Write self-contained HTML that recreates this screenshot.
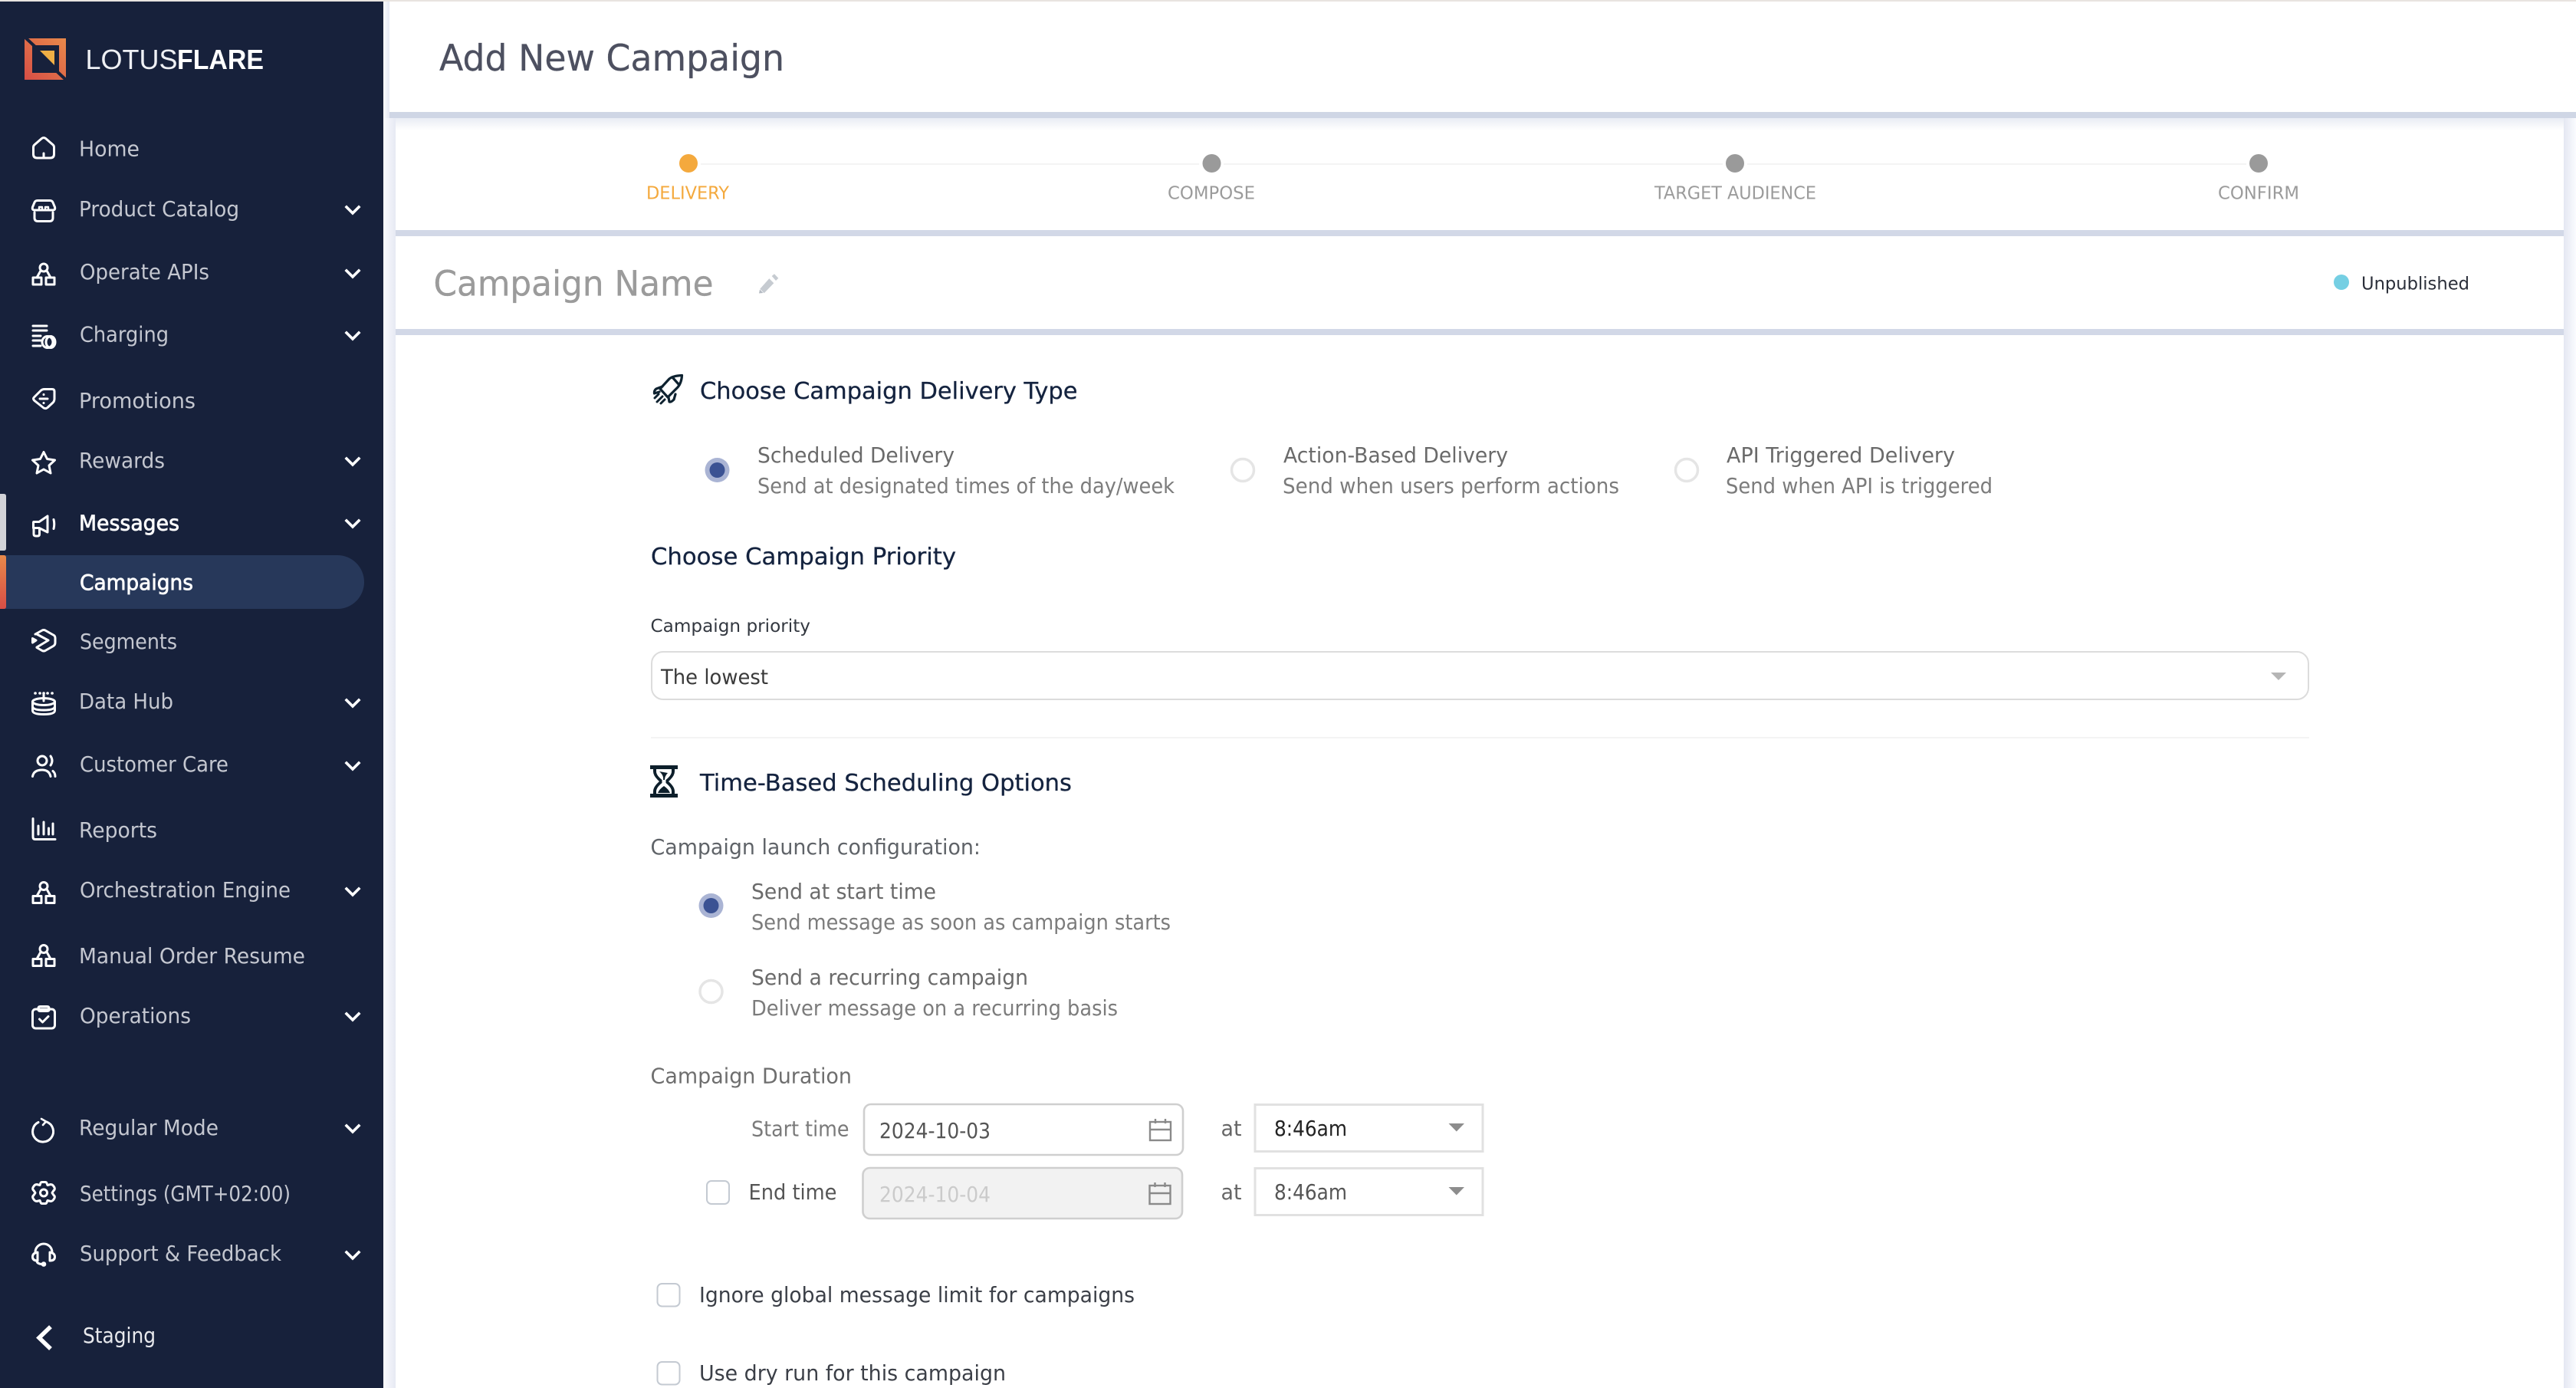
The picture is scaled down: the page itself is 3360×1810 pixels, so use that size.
<!DOCTYPE html>
<html lang="en">
<head>
<meta charset="utf-8">
<title>Add New Campaign</title>
<style>
html,body{margin:0;padding:0;width:3360px;height:1810px;overflow:hidden;background:#fff}
svg{display:block}
text{font-family:"DejaVu Sans","Liberation Sans",sans-serif;white-space:pre}
.lg{font-family:"Liberation Sans",Arial,sans-serif}
.n{font-size:27.4px;fill:#c4c7d0}
.na{font-size:27.4px;fill:#fff;stroke:#fff;stroke-width:.7px}
.ic{fill:none;stroke:#fff;stroke-width:3;stroke-linecap:round;stroke-linejoin:round}
.ch{fill:none;stroke:#fff;stroke-width:3.6;stroke-linecap:square;stroke-linejoin:miter}
.st{font-size:23.5px;fill:#9b9b9b}
.h{font-size:30.4px;fill:#14233f;stroke:#14233f;stroke-width:.3px}
.t{font-size:27.4px;fill:#6a6a6a}
.s{font-size:27.4px;fill:#7c7c7c}
.b{fill:none;stroke:#c4cad2;stroke-width:2}
</style>
</head>
<body>
<svg xmlns="http://www.w3.org/2000/svg" width="3360" height="1810" viewBox="0 0 3360 1810">
<defs>
<linearGradient id="lg" x1="1" y1="0" x2="0" y2="1"><stop offset="0" stop-color="#e8894a"/><stop offset="1" stop-color="#d74e46"/></linearGradient>
<linearGradient id="bar" x1="0" y1="0" x2="0" y2="1"><stop offset="0" stop-color="#e8894a"/><stop offset="1" stop-color="#d74e46"/></linearGradient>
<linearGradient id="sl" x1="0" y1="0" x2="1" y2="0"><stop offset="0" stop-color="#fbfbfe"/><stop offset="1" stop-color="#e6e9f3"/></linearGradient>
<linearGradient id="sr" x1="0" y1="0" x2="1" y2="0"><stop offset="0" stop-color="#e4e7f2"/><stop offset="1" stop-color="#fafbfe"/></linearGradient>
<linearGradient id="st" x1="0" y1="0" x2="0" y2="1"><stop offset="0" stop-color="#e9ecf4"/><stop offset="1" stop-color="#ffffff"/></linearGradient>
<g id="org" class="ic"><circle cx="16" cy="7" r="5"/><rect x="2" y="20" width="11" height="9"/><rect x="19" y="20" width="11" height="9"/><path d="M12 11 L7 20 M20 11 L25 20"/></g>
</defs>

<!-- page -->
<rect width="3360" height="1810" fill="#fff"/>
<rect x="0" y="0" width="3360" height="2" fill="#e8e4e0"/>

<!-- shadows + cards -->
<rect x="500" y="2" width="8" height="152" fill="url(#sl)"/>
<rect x="500" y="154" width="16" height="1656" fill="url(#sl)"/>
<rect x="3344" y="154" width="16" height="1656" fill="url(#sr)"/>
<rect x="508" y="146" width="2852" height="8" fill="#cfd6e5"/>
<rect x="516" y="154" width="2828" height="16" fill="url(#st)"/>
<rect x="516" y="300" width="2828" height="8" fill="#d2d8e7"/>
<rect x="516" y="429" width="2828" height="8" fill="#d2d8e7"/>

<!-- sidebar -->
<rect x="0" y="2" width="500" height="1808" fill="#17213b"/>
<path d="M32 50 H86 V104 H32 Z M42 59 V95 H77 V59 Z" fill="url(#lg)" fill-rule="evenodd"/>
<path d="M33 49 L47 62 M72 91 L87 105" stroke="#17213b" stroke-width="4" fill="none"/>
<path d="M52 66 H71 V85 Z" fill="#efaf45"/>
<text class="lg" x="111.5" y="90" font-size="36" fill="#eef0f4" textLength="120" lengthAdjust="spacingAndGlyphs">LOTUS</text>
<text class="lg" x="231" y="90" font-size="36" fill="#fff" style="font-weight:700" textLength="113" lengthAdjust="spacingAndGlyphs">FLARE</text>

<!-- active marks -->
<path d="M0 644 H5 Q8 644 8 647 V715 Q8 718 5 718 H0 Z" fill="#d2d3d8"/>
<path d="M0 724 H440 A35 35 0 0 1 440 794 H0 Z" fill="#27385a"/>
<path d="M0 724 H5 Q8 724 8 727 V791 Q8 794 5 794 H0 Z" fill="url(#bar)"/>

<!-- nav labels -->
<text class="n" x="103" y="203.5" textLength="79" lengthAdjust="spacingAndGlyphs">Home</text>
<text class="n" x="103" y="282" textLength="209" lengthAdjust="spacingAndGlyphs">Product Catalog</text>
<text class="n" x="104" y="364" textLength="169" lengthAdjust="spacingAndGlyphs">Operate APIs</text>
<text class="n" x="104" y="445.5" textLength="116" lengthAdjust="spacingAndGlyphs">Charging</text>
<text class="n" x="103" y="532" textLength="152" lengthAdjust="spacingAndGlyphs">Promotions</text>
<text class="n" x="103" y="610" textLength="112" lengthAdjust="spacingAndGlyphs">Rewards</text>
<text class="na" x="103" y="691.5" textLength="131" lengthAdjust="spacingAndGlyphs">Messages</text>
<text class="na" x="104" y="769" textLength="148" lengthAdjust="spacingAndGlyphs">Campaigns</text>
<text class="n" x="104" y="846" textLength="127" lengthAdjust="spacingAndGlyphs">Segments</text>
<text class="n" x="103" y="924" textLength="123" lengthAdjust="spacingAndGlyphs">Data Hub</text>
<text class="n" x="104" y="1006" textLength="194" lengthAdjust="spacingAndGlyphs">Customer Care</text>
<text class="n" x="103" y="1092" textLength="102" lengthAdjust="spacingAndGlyphs">Reports</text>
<text class="n" x="104" y="1170" textLength="275" lengthAdjust="spacingAndGlyphs">Orchestration Engine</text>
<text class="n" x="103" y="1256" textLength="295" lengthAdjust="spacingAndGlyphs">Manual Order Resume</text>
<text class="n" x="104" y="1334" textLength="145" lengthAdjust="spacingAndGlyphs">Operations</text>
<text class="n" x="103" y="1480" textLength="182" lengthAdjust="spacingAndGlyphs">Regular Mode</text>
<text class="n" x="104" y="1566" textLength="275" lengthAdjust="spacingAndGlyphs">Settings (GMT+02:00)</text>
<text class="n" x="104" y="1644" textLength="263" lengthAdjust="spacingAndGlyphs">Support &amp; Feedback</text>
<text x="108" y="1751" font-size="27.4" fill="#e8e9ed" textLength="95" lengthAdjust="spacingAndGlyphs">Staging</text>

<!-- chevrons -->
<g class="ch">
<path d="M452 270 L460 278 L468 270"/>
<path d="M452 353 L460 361 L468 353"/>
<path d="M452 434 L460 442 L468 434"/>
<path d="M452 598 L460 606 L468 598"/>
<path d="M452 679 L460 687 L468 679"/>
<path d="M452 913 L460 921 L468 913"/>
<path d="M452 995 L460 1003 L468 995"/>
<path d="M452 1159 L460 1167 L468 1159"/>
<path d="M452 1322 L460 1330 L468 1322"/>
<path d="M452 1468 L460 1476 L468 1468"/>
<path d="M452 1633 L460 1641 L468 1633"/>
</g>

<!-- nav icons -->
<g class="ic" transform="translate(41,178)"><path d="M2.5 14 Q2.5 12 4 10.8 L13.5 2.5 Q16 .8 18.5 2.5 L28 10.8 Q29.5 12 29.5 14 V23 Q29.5 28 24.5 28 H7.5 Q2.5 28 2.5 23 Z M16 22 V28"/></g>
<g class="ic" transform="translate(41,260)"><path d="M8 1.5 H24 Q27 1.5 28 4 L30.5 10 Q31.5 14 28 14 H4 Q.5 14 1.5 10 L4 4 Q5 1.5 8 1.5Z"/><path d="M10 14 V10 H14 V14 M18 14 V10 H22 V14" stroke-width="2.4"/><path d="M4 17 V24 Q4 28.5 8.5 28.5 H23.5 Q28 28.5 28 24 V17"/></g>
<use href="#org" transform="translate(41,342)"/>
<g class="ic" transform="translate(41,423)"><path d="M2 2 H20 M2 8 H20 M2 15 H12 M2 21 H12 M2 28 H12"/><ellipse cx="21" cy="23" rx="7" ry="7.5"/><ellipse cx="25" cy="23" rx="6" ry="7.5"/></g>
<g class="ic" transform="translate(41,505)"><path d="M3.5 13 L12 4.5 Q14 2.5 17 2.5 H27 Q30 2.5 30 5.5 V15 Q30 18 28 20 L21 26.5 Q18.5 28.5 16 27 L4 17.5 Q1.5 15 3.5 13Z"/><path d="M11 15 H21 M16 9.5 V9.6 M16 20.5 V20.6"/></g>
<g class="ic" transform="translate(41,588)"><path d="M16 1.5 L20.5 10.5 L30.5 12 L23 19 L25 29 L16 24 L7 29 L9 19 L1.5 12 L11.5 10.5 Z"/></g>
<g class="ic" transform="translate(41,670.5)"><path d="M3 10 H10 L21 2.5 V23.5 L10 18 H2.5 V11 Q2.5 10 3 10Z"/><path d="M3 18 V26 Q3 28.5 6 28.5 H8 Q10.5 28.5 10.5 26 V19"/><path d="M29 7 Q30.5 13 29 19" stroke-width="3"/></g>
<g class="ic" transform="translate(41,820)"><path d="M5 7 L14 2 Q16 1 18 2 L28.5 8 Q31 9 31 12 V18 Q31 21 28.5 22.5 L18 28.5 Q16 29.5 14 28.5 L7 24.5"/><path d="M7 7 L22 15 L7 24"/><path d="M1.5 12.5 L6 15 L1.5 18 Z"/></g>
<g class="ic" transform="translate(41,901)"><path d="M5 3 H5.1 M11 3 H11.1 M16 3 H16.1 M21 3 H21.1 M27 3 H27.1" stroke-width="3.6"/><path d="M16 3 V13" /><ellipse cx="16" cy="14" rx="14.5" ry="4.5"/><path d="M1.5 14 V25.5 Q1.5 30.5 16 30.5 Q30.5 30.5 30.5 25.5 V14 M1.5 20 Q1.5 25 16 25 Q30.5 25 30.5 20"/></g>
<g class="ic" transform="translate(41,984)"><circle cx="14" cy="8" r="6"/><path d="M25 2 Q29 8 25 14"/><path d="M1.5 28.5 Q3 20 14 20 Q23 20 25 28.5"/><path d="M28 21.5 Q31 24 31 28.5"/></g>
<g class="ic" transform="translate(41,1066)"><path d="M2 1.5 V25.5 Q2 28.5 5 28.5 H31"/><path d="M9 11 V22 M16 6 V22 M22.5 14 V22 M28 8 V22"/></g>
<use href="#org" transform="translate(41,1148.5)"/>
<use href="#org" transform="translate(41,1230.5)"/>
<g class="ic" transform="translate(41,1311)"><rect x="1.5" y="5" width="29" height="25" rx="4"/><path d="M9 5.5 V4 Q9 1.5 11.5 1.5 H20.5 Q23 1.5 23 4 V5.5 Q23 7.5 20.5 7.5 H11.5 Q9 7.5 9 5.5Z"/><path d="M10.5 18 L14.5 22 L22 14.5"/></g>
<g class="ic" transform="translate(41,1458)"><path d="M20 5 A13.5 13.5 0 1 1 9 5.5"/><path d="M13 1 L19 4.5 L15 9" stroke-width="2.6"/></g>
<g class="ic" transform="translate(41,1540)"><path d="M12 2.5 Q12.5 1.5 14 1.5 H18 Q19.5 1.5 20 3 L21 5.5 L25 4.5 Q27.5 4.5 29 7 L30 8.5 Q31 11 29 12.5 L27 15.5 L29 18.5 Q31 20 30 22.5 L29 24 Q27.5 26.5 25 26.5 L21 25.5 L20 28 Q19.5 29.5 18 29.5 H14 Q12.5 29.5 12 28 L11 25.5 L7 26.5 Q4.5 26.5 3 24 L2 22.5 Q1 20 3 18.5 L5 15.5 L3 12.5 Q1 11 2 8.5 L3 7 Q4.5 4.5 7 4.5 L11 5.5 Z"/><circle cx="16" cy="15.5" r="4.5"/></g>
<g class="ic" transform="translate(41,1621)"><path d="M5 12 A11 11 0 0 1 27 12"/><path d="M8 12 Q1.5 13 1.5 18 Q1.5 23 8 23 Z M24 12 Q30.5 13 30.5 18 Q30.5 23 24 23 Z"/><path d="M7 24 Q8 27 13 27.5"/><circle cx="16" cy="27.5" r="1.8" fill="#fff"/></g>
<path d="M64 1732 L51 1744.5 L64 1757" fill="none" stroke="#fff" stroke-width="5.5" stroke-linecap="square"/>

<!-- header -->
<text x="573" y="92" font-size="47" fill="#4d5060" stroke="#4d5060" stroke-width=".3" textLength="450" lengthAdjust="spacingAndGlyphs">Add New Campaign</text>

<!-- stepper -->
<path d="M914 214 H1564 M1596 214 H2247 M2279 214 H2930" stroke="#f4f4f4" stroke-width="2"/>
<circle cx="898" cy="213" r="12" fill="#f4a93d"/>
<circle cx="1580.5" cy="213" r="12" fill="#9a9a9a"/>
<circle cx="2263" cy="213" r="12" fill="#9a9a9a"/>
<circle cx="2946" cy="213" r="12" fill="#9a9a9a"/>
<text class="st" x="843" y="259.5" style="fill:#f4a93d" textLength="108" lengthAdjust="spacingAndGlyphs">DELIVERY</text>
<text class="st" x="1523" y="259.5" textLength="114" lengthAdjust="spacingAndGlyphs">COMPOSE</text>
<text class="st" x="2158" y="259.5" textLength="211" lengthAdjust="spacingAndGlyphs">TARGET AUDIENCE</text>
<text class="st" x="2893" y="259.5" textLength="106" lengthAdjust="spacingAndGlyphs">CONFIRM</text>

<!-- campaign name -->
<text x="565.5" y="385.5" font-size="45" fill="#9b9b9b" stroke="#9b9b9b" stroke-width=".3" textLength="365" lengthAdjust="spacingAndGlyphs">Campaign Name</text>
<path d="M991.3 376.7 L1003.3 363.3 L1009.3 369.3 L996.7 382.3 Z" fill="#c6cbd1"/>
<path d="M990 382.5 L991 377.5 L995.5 382 Z" fill="#b4bac2"/>
<path d="M1006.7 360 L1010 357.3 L1015.3 362.7 L1012 366 Z" fill="#c6cbd1"/>
<circle cx="3054" cy="368" r="10" fill="#75cfe3"/>
<text x="3080" y="377.5" font-size="23.5" fill="#2b2f3a" textLength="141" lengthAdjust="spacingAndGlyphs">Unpublished</text>

<!-- delivery type -->
<g transform="translate(840,480)" fill="none" stroke="#0e2230" stroke-width="3.2" stroke-linejoin="round" stroke-linecap="round">
<path d="M49.5 9.5 Q38 10 33 14 L21 27 L31 38 L44 25 Q49 19 49.5 9.5 Z"/>
<path d="M37 12 L46 22"/>
<path d="M24 24 L16 27 Q13 29 13.5 33 L20 31"/>
<path d="M32 38 L33 44 Q35 45 39 41 L41 34"/>
<path d="M19 34 L14 39 M24 37 L17 44 M27 41 L22 46" stroke-width="3"/>
</g>
<text class="h" x="913" y="520" textLength="492.5" lengthAdjust="spacingAndGlyphs">Choose Campaign Delivery Type</text>

<circle cx="935.5" cy="613" r="16" fill="#aab4d4"/><circle cx="935.5" cy="613" r="10" fill="#3b5293"/>
<text class="t" x="988" y="603" textLength="257" lengthAdjust="spacingAndGlyphs">Scheduled Delivery</text>
<text class="s" x="988" y="643" textLength="544" lengthAdjust="spacingAndGlyphs">Send at designated times of the day/week</text>
<circle cx="1621" cy="613" r="14.5" fill="#fff" stroke="#e5e5e5" stroke-width="3.5"/>
<text class="t" x="1674" y="603" textLength="293" lengthAdjust="spacingAndGlyphs">Action-Based Delivery</text>
<text class="s" x="1673" y="643" textLength="439" lengthAdjust="spacingAndGlyphs">Send when users perform actions</text>
<circle cx="2200" cy="613" r="14.5" fill="#fff" stroke="#e5e5e5" stroke-width="3.5"/>
<text class="t" x="2252" y="603" textLength="298" lengthAdjust="spacingAndGlyphs">API Triggered Delivery</text>
<text class="s" x="2251" y="643" textLength="348" lengthAdjust="spacingAndGlyphs">Send when API is triggered</text>

<!-- priority -->
<text class="h" x="849" y="736" textLength="398" lengthAdjust="spacingAndGlyphs">Choose Campaign Priority</text>
<text x="848.5" y="824" font-size="23.5" fill="#333840" textLength="208.5" lengthAdjust="spacingAndGlyphs">Campaign priority</text>
<rect x="850" y="850" width="2161" height="62" rx="15" fill="#fff" stroke="#dcdcdc" stroke-width="2"/>
<text x="862" y="892" font-size="26.5" fill="#3a3a3a" textLength="140" lengthAdjust="spacingAndGlyphs">The lowest</text>
<path d="M2962 877 H2982 L2972 887 Z" fill="#b5b5b5"/>
<rect x="849" y="961" width="2163" height="2" fill="#f4f4f4"/>

<!-- scheduling -->
<g transform="translate(848,998)">
<path d="M0 0 H36 V5 H32 V8 Q32 14 24 21 Q32 28 32 34 V37 H36 V42 H0 V37 H4 V34 Q4 28 12 21 Q4 14 4 8 V5 H0 Z M8 5 V8 Q8 13 15.5 19 L15.5 23 Q8 29 8 34 V37 H28 V34 Q28 29 20.5 23 L20.5 19 Q28 13 28 8 V5 Z" fill="#0d1f2b" fill-rule="evenodd"/>
<path d="M12 8 Q18 13 17 19 L19 19 Q19 14 23 10 Z M10 36 Q12 31 18 27 Q24 31 26 36 Z" fill="#0d1f2b"/>
</g>
<text class="h" x="913" y="1031" textLength="485" lengthAdjust="spacingAndGlyphs">Time-Based Scheduling Options</text>
<text x="848.5" y="1114" font-size="27.4" fill="#5f6368" textLength="430.5" lengthAdjust="spacingAndGlyphs">Campaign launch configuration:</text>

<circle cx="927.5" cy="1181" r="16" fill="#aab4d4"/><circle cx="927.5" cy="1181" r="10" fill="#3b5293"/>
<text class="t" x="980" y="1172" textLength="241" lengthAdjust="spacingAndGlyphs">Send at start time</text>
<text class="s" x="980" y="1212" textLength="547" lengthAdjust="spacingAndGlyphs">Send message as soon as campaign starts</text>
<circle cx="927.5" cy="1293" r="14.5" fill="#fff" stroke="#e5e5e5" stroke-width="3.5"/>
<text class="t" x="980" y="1284" textLength="361" lengthAdjust="spacingAndGlyphs">Send a recurring campaign</text>
<text class="s" x="980" y="1324" textLength="478" lengthAdjust="spacingAndGlyphs">Deliver message on a recurring basis</text>

<!-- duration -->
<text x="848.5" y="1412.5" font-size="27.4" fill="#6e6e6e" textLength="262.5" lengthAdjust="spacingAndGlyphs">Campaign Duration</text>
<text x="980" y="1481.5" font-size="27.4" fill="#7a7a7a" textLength="127.5" lengthAdjust="spacingAndGlyphs">Start time</text>
<rect x="1127" y="1440" width="416" height="66" rx="9" fill="#fff" stroke="#cfcfcf" stroke-width="2.6"/>
<text x="1147" y="1484" font-size="27.4" fill="#555" textLength="145" lengthAdjust="spacingAndGlyphs">2024-10-03</text>
<g fill="none" stroke="#8a8a8a" stroke-width="2.4"><rect x="1500" y="1463" width="27" height="24"/><path d="M1500 1473 H1527 M1507 1459 V1465 M1520 1459 V1465"/></g>
<text x="1592.5" y="1481" font-size="27.4" fill="#666" textLength="27" lengthAdjust="spacingAndGlyphs">at</text>
<rect x="1637" y="1440.5" width="297" height="61" fill="#fff" stroke="#e1e1e1" stroke-width="3"/>
<text x="1662" y="1481" font-size="27.4" fill="#222" textLength="95" lengthAdjust="spacingAndGlyphs">8:46am</text>
<path d="M1889.5 1465 H1910 L1899.8 1475.5 Z" fill="#8d8d8d"/>

<rect class="b" x="922" y="1540" width="29" height="30" rx="6"/>
<text x="976.5" y="1564" font-size="27.4" fill="#555" textLength="115" lengthAdjust="spacingAndGlyphs">End time</text>
<rect x="1125.5" y="1523" width="416.5" height="66" rx="9" fill="#f2f2f2" stroke="#cfcfcf" stroke-width="2.6"/>
<text x="1147" y="1567" font-size="27.4" fill="#cbcbcb" textLength="145" lengthAdjust="spacingAndGlyphs">2024-10-04</text>
<g fill="none" stroke="#8a8a8a" stroke-width="2.4"><rect x="1499.5" y="1546" width="27" height="24"/><path d="M1499.5 1556 H1526.5 M1506.5 1542 V1548 M1519.5 1542 V1548"/></g>
<text x="1592.5" y="1564" font-size="27.4" fill="#666" textLength="27" lengthAdjust="spacingAndGlyphs">at</text>
<rect x="1637" y="1523.5" width="297" height="61" fill="#fff" stroke="#e1e1e1" stroke-width="3"/>
<text x="1662" y="1564" font-size="27.4" fill="#555" textLength="95" lengthAdjust="spacingAndGlyphs">8:46am</text>
<path d="M1889.5 1548 H1910 L1899.8 1558.5 Z" fill="#8d8d8d"/>

<rect class="b" x="857.5" y="1674" width="29" height="29.5" rx="6"/>
<text x="912" y="1698" font-size="27.4" fill="#3b3f47" textLength="568" lengthAdjust="spacingAndGlyphs">Ignore global message limit for campaigns</text>
<rect class="b" x="857.5" y="1776" width="29" height="29.5" rx="6"/>
<text x="912" y="1800" font-size="27.4" fill="#3b3f47" textLength="400" lengthAdjust="spacingAndGlyphs">Use dry run for this campaign</text>
</svg>
</body>
</html>
